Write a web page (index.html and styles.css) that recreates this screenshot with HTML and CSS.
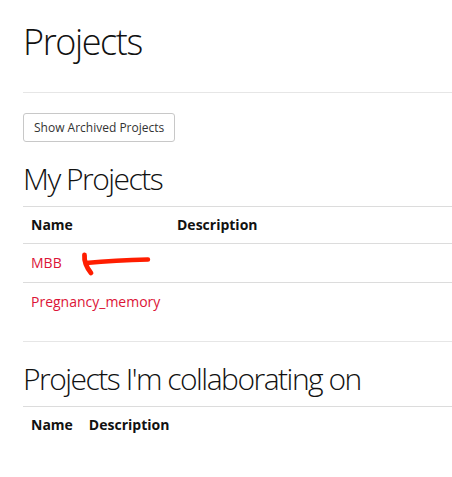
FILE: index.html
```html
<!DOCTYPE html>
<html>
<head>
<meta charset="utf-8">
<link rel="stylesheet" href="styles.css">
</head>
<body>
<div class="page">
  <h1 class="title">Projects</h1>
  <hr class="rule">
  <button class="btn">Show Archived Projects</button>

  <h2 class="section-title first">My Projects</h2>
  <table class="tbl tbl-full">
    <thead>
      <tr><th class="col-name">Name</th><th>Description</th></tr>
    </thead>
    <tbody>
      <tr><td><a class="proj-link" href="#">MBB</a></td><td></td></tr>
      <tr><td><a class="proj-link" href="#">Pregnancy_memory</a></td><td></td></tr>
    </tbody>
  </table>

  <hr class="rule rule-sep">

  <h2 class="section-title">Projects I'm collaborating on</h2>
  <table class="tbl">
    <thead>
      <tr><th>Name</th><th>Description</th></tr>
    </thead>
  </table>

  <svg class="arrow" width="76" height="30" viewBox="0 0 76 30">
    <path d="M6.5 7 C6 13 9 20 13 25" fill="none" stroke="#ff1d00" stroke-width="4.8" stroke-linecap="round"/>
    <path d="M8 15 C30 13 50 12 70 11.5" fill="none" stroke="#ff1d00" stroke-width="4.4" stroke-linecap="round"/>
  </svg>
</div>
</body>
</html>
```

FILE: styles.css
```css
html, body {
  margin: 0;
  padding: 0;
  background: #fff;
}

body {
  font-family: "Open Sans", "Liberation Sans", sans-serif;
  color: #111;
  font-size: 14px;
  line-height: 20px;
}

.page {
  position: relative;
  padding: 22px 0 0 23px;
}

.title {
  font-size: 36px;
  line-height: 40px;
  font-weight: 350;
  margin: 0 0 30px;
  color: #111;
  letter-spacing: -1.4px;
}

.rule {
  border: 0;
  border-top: 1px solid #e6e6e6;
  margin: 0 0 20px;
  height: 0;
}

.rule-sep {
  margin-top: 20px;
}

.btn {
  display: block;
  font-family: "Open Sans", "Liberation Sans", sans-serif;
  font-size: 12px;
  line-height: 17px;
  padding: 5px 10px;
  border: 1px solid #c8c8c8;
  border-radius: 3px;
  background: #fff;
  color: #333;
  margin: 0;
}

.section-title {
  font-size: 30px;
  line-height: 33px;
  font-weight: 350;
  margin: 0;
  padding-bottom: 11px;
  border-bottom: 1px solid #dcdcdc;
  color: #111;
  letter-spacing: -1.5px;
}

.section-title.first {
  margin-top: 20px;
}

.tbl {
  border-collapse: collapse;
  border-spacing: 0;
}

.tbl-full {
  width: 100%;
}

.tbl th {
  text-align: left;
  font-weight: 700;
  padding: 8px;
  color: #111;
}

.tbl td {
  padding: 9px 8px 9px;
  border-top: 1px solid #dcdcdc;
}

.col-name {
  width: 130px;
}

.proj-link {
  color: #dc1437;
  text-decoration: none;
}

.arrow {
  position: absolute;
  left: 78px;
  top: 248px;
}
```
